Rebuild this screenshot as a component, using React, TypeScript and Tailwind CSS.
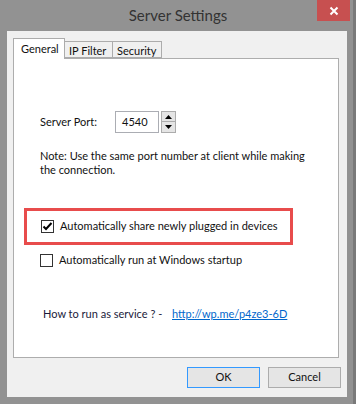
import React from "react";

function Checkbox({ checked }: { checked?: boolean }) {
  return (
    <div className="w-[13px] h-[13px] border border-[#333333] bg-white flex items-center justify-center shrink-0">
      {checked && (
        <svg width="11" height="11" viewBox="0 0 11 11">
          <path d="M1.5 5.5 L4 8 L9.5 2" fill="none" stroke="#000" strokeWidth="2" />
        </svg>
      )}
    </div>
  );
}

export default function App() {
  return (
    <div
      className="w-[356px] h-[404px] bg-[#929292] flex flex-col text-[11px] text-[#111] border-r-[3px] border-r-[#7a7a7a] whitespace-nowrap"
      style={{ fontFamily: 'Lato, "Open Sans", sans-serif' }}
    >
      {/* Title bar */}
      <div className="h-[31px] flex shrink-0 relative">
        <div className="flex-1 flex items-center justify-center pl-[3px] text-[15px] text-[#333] pb-[1px]">
          Server Settings
        </div>
        <div className="absolute left-[317px] top-0 w-[33px] h-[21px] bg-[#c75050] flex items-center justify-center">
          <svg width="10" height="10" viewBox="0 0 10 10">
            <path d="M1.5 1.5 L8.5 8.5 M8.5 1.5 L1.5 8.5" stroke="#fff" strokeWidth="2" />
          </svg>
        </div>
      </div>
      {/* Client */}
      <div className="ml-[7px] mr-[6px] h-[366px] bg-[#f0f0f0] flex flex-col pt-[7px] px-[6px]">
        {/* Tabs */}
        <div className="flex items-end h-[20px] relative z-10">
          <div className="w-[52px] h-[21px] bg-white border border-[#acacac] border-b-0 pl-[7px] pt-[2px] leading-[16px] mb-[-1px]">
            General
          </div>
          <div className="w-[48px] h-[17px] bg-[#f0f0f0] border border-[#acacac] border-l-0 pl-[4px] pt-[1px] leading-[15px]">
            IP Filter
          </div>
          <div className="w-[49px] h-[17px] bg-[#f0f0f0] border border-[#acacac] border-l-0 pl-[4px] pt-[1px] leading-[15px]">
            Security
          </div>
        </div>
        {/* Panel */}
        <div className="w-[326px] h-[300px] bg-white border border-[#adadad] flex flex-col pl-[26px] pt-[52px]">
          <div className="flex items-center h-[22px]">
            <div className="w-[75px]">Server Port:</div>
            <div className="w-[44px] h-[22px] border border-[#abadb3] flex items-center pl-[6px]">4540</div>
            <div className="ml-[2px] w-[15px] h-[22px] flex flex-col">
              <div className="h-[11px] bg-[#e5e5e5] border border-[#acacac] flex items-center justify-center">
                <svg width="7" height="4" viewBox="0 0 7 4"><path d="M0 4 L3.5 0 L7 4 Z" fill="#000" /></svg>
              </div>
              <div className="h-[11px] bg-[#e5e5e5] border border-[#acacac] border-t-0 flex items-center justify-center">
                <svg width="7" height="4" viewBox="0 0 7 4"><path d="M0 0 L7 0 L3.5 4 Z" fill="#000" /></svg>
              </div>
            </div>
          </div>
          <div className="mt-[16px] leading-[14px]">
            Note: Use the same port number at client while making
            <br />
            the connection.
          </div>
          <div className="mt-[31px] ml-[-16px] w-[269px] h-[37px] border-[3px] border-[#e84c4c] flex items-center pl-[14px]">
            <Checkbox checked />
            <span className="ml-[6px]">Automatically share newly plugged in devices</span>
          </div>
          <div className="mt-[9px] h-[13px] flex items-center">
            <Checkbox />
            <span className="ml-[6px]">Automatically run at Windows startup</span>
          </div>
          <div className="mt-[40px] h-[14px] flex items-center pl-[3px]">
            <span className="w-[129px] text-[#1a1a3a]">How to run as service ? -</span>
            <span className="text-[#0066cc] underline">http://wp.me/p4ze3-6D</span>
          </div>
        </div>
        {/* Buttons */}
        <div className="flex justify-end gap-[8px] mt-[9px] pr-[0px]">
          <button className="w-[73px] h-[21px] bg-[#e5e5e5] border border-[#3399ff] text-[11px]">OK</button>
          <button className="w-[73px] h-[21px] bg-[#e5e5e5] border border-[#acacac] text-[11px]">Cancel</button>
        </div>
      </div>
    </div>
  );
}
